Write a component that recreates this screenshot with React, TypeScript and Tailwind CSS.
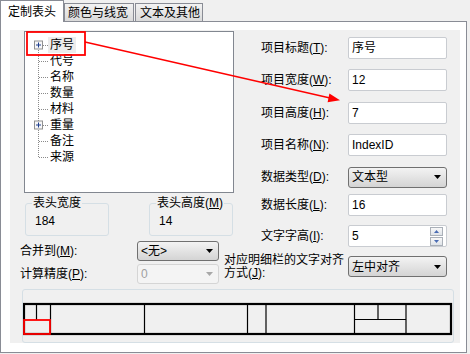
import React from 'react';

const treeItems = ['序号', '代号', '名称', '数量', '材料', '重量', '备注', '来源'];

function Key({ text, k }: { text: string; k: string }) {
  return (
    <span>
      {text}(<span className="underline underline-offset-[1px]">{k}</span>):
    </span>
  );
}

function SpinBtn({ up }: { up?: boolean }) {
  return (
    <div className="flex h-[9px] w-[13px] items-center justify-center border border-[#aab0b8] bg-linear-to-b from-[#f8f8f8] to-[#dfe3e8]">
      <svg width="5" height="3" viewBox="0 0 5 3">
        <path d={up ? 'M0 3H5L2.5 0Z' : 'M0 0H5L2.5 3Z'} fill="#4a6cb3" />
      </svg>
    </div>
  );
}

function TextBox({ value, spin }: { value: string; spin?: boolean }) {
  return (
    <div className="flex h-[22px] w-[99px] items-center rounded-[2px] border border-[#c9ccd1] bg-white pl-[3px]">
      <span className="leading-[14px]">{value}</span>
      {spin && (
        <div className="ml-auto mr-[3px] flex flex-col gap-[1px] self-start pt-[1px]">
          <SpinBtn up />
          <SpinBtn />
        </div>
      )}
    </div>
  );
}

function Combo({ value, wide, disabled }: { value: string; wide?: boolean; disabled?: boolean }) {
  const size = wide ? 'w-[99px] h-[21px]' : 'w-[82px] h-[20px]';
  const look = disabled
    ? 'border-[#d5d5d5] bg-[#f4f4f4] text-[#a0a0a0]'
    : 'border-[#707070] bg-linear-to-b from-[#f3f3f3] to-[#d4d4d4]';
  return (
    <div className={`flex items-center rounded-[3px] border pl-[3px] pr-[5px] ${size} ${look}`}>
      <span className="leading-[14px]">{value}</span>
      <svg className="ml-auto" width="7" height="4" viewBox="0 0 7 4">
        <path d="M0 0H7L3.5 4Z" fill={disabled ? '#a8a8a8' : '#000'} />
      </svg>
    </div>
  );
}

function TreeLines() {
  return (
    <svg width="14" height="128" viewBox="0 0 14 128" className="shrink-0">
      <line x1="4.5" y1="13" x2="4.5" y2="120" stroke="#8a8a8a" strokeDasharray="1 1" />
      {treeItems.map((_, i) => {
        const y = i * 16 + 8.5;
        const box = i === 0 || i === 5;
        return (
          <g key={i}>
            <line x1={box ? 9 : 5} y1={y} x2="14" y2={y} stroke="#8a8a8a" strokeDasharray="1 1" />
            {box && (
              <g>
                <rect x="0.5" y={y - 4.5} width="8" height="8" fill="#f7f7f7" stroke="#919191" />
                <line x1="2" y1={y - 0.5} x2="7" y2={y - 0.5} stroke="#1f3f8f" />
                <line x1="4.5" y1={y - 3} x2="4.5" y2={y + 2} stroke="#1f3f8f" />
              </g>
            )}
          </g>
        );
      })}
    </svg>
  );
}

function GroupBox({ title, value }: { title: React.ReactNode; value: string }) {
  return (
    <fieldset className="h-[39px] w-[84px] rounded-[3px] border border-[#d5dfe5]">
      <legend className="ml-[6px] px-[1px] leading-[12px]">{title}</legend>
      <div className="mt-[6px] pl-[9px] leading-[12px]">{value}</div>
    </fieldset>
  );
}

export default function App() {
  return (
    <div className="relative h-[354px] w-[470px] overflow-hidden bg-[#f0f0f0] font-['Liberation_Sans','Noto_Sans_CJK_SC',sans-serif] text-[12px] text-black">
      {/* tabs */}
      <div className="flex h-[21px] items-end">
        <div className="relative z-10 -mb-px flex h-[22px] w-[64px] items-center border border-b-0 border-[#898c95] bg-white pl-[7px]">
          定制表头
        </div>
        <div className="flex h-[18px] w-[70px] items-center border border-b-0 border-[#898c95] bg-linear-to-b from-[#f2f2f2] to-[#dadada] pl-[3px]">
          颜色与线宽
        </div>
        <div className="ml-[1px] flex h-[18px] w-[68px] items-center border border-b-0 border-[#898c95] bg-linear-to-b from-[#f2f2f2] to-[#dadada] pl-[4px]">
          文本及其他
        </div>
      </div>

      {/* tab page */}
      <div className="h-[332px] w-[467px] border border-[#898c95] bg-white pl-[9px] pt-[8px]">
        <div className="flex h-[313px] w-[450px] flex-col bg-[#f0f0f0]">
          <div className="flex h-[254px]">
            {/* left column */}
            <div className="flex w-[224px] shrink-0 flex-col">
              <div className="ml-[14px] mt-[1px] h-[162px] w-[210px] border border-[#828790] bg-white pl-[9px] pt-[5px]">
                <div className="flex">
                  <TreeLines />
                  <div className="flex flex-col">
                    {treeItems.map((name, i) => (
                      <div key={name} className="flex h-[16px] items-center">
                        <span className={`px-[2px] leading-[16px] ${i === 0 ? 'bg-[#ececec]' : ''}`}>{name}</span>
                      </div>
                    ))}
                  </div>
                </div>
              </div>

              <div className="mt-[4px] flex gap-[40px] pl-[15px]">
                <GroupBox title="表头宽度" value="184" />
                <GroupBox title={<span>表头高度(<span className="underline underline-offset-[1px]">M</span>)</span>} value="14" />
              </div>

              <div className="mt-[5px] flex h-[20px] items-center">
                <div className="w-[127px] pl-[10px]"><Key text="合并到" k="M" /></div>
                <Combo value="<无>" />
              </div>
              <div className="mt-[3px] flex h-[20px] items-center">
                <div className="w-[127px] pl-[10px]"><Key text="计算精度" k="P" /></div>
                <Combo value="0" disabled />
              </div>
            </div>

            {/* right column */}
            <div className="flex flex-1 flex-col">
              <div className="mt-[7px] flex h-[22px] items-center pl-[27px]">
                <div className="w-[87px]"><Key text="项目标题" k="T" /></div>
                <TextBox value="序号" />
              </div>
              <div className="mt-[10px] flex h-[22px] items-center pl-[27px]">
                <div className="w-[87px]"><Key text="项目宽度" k="W" /></div>
                <TextBox value="12" />
              </div>
              <div className="mt-[11px] flex h-[22px] items-center pl-[27px]">
                <div className="w-[87px]"><Key text="项目高度" k="H" /></div>
                <TextBox value="7" />
              </div>
              <div className="mt-[10px] flex h-[22px] items-center pl-[27px]">
                <div className="w-[87px]"><Key text="项目名称" k="N" /></div>
                <TextBox value="IndexID" />
              </div>
              <div className="mt-[11px] flex h-[20px] items-center pl-[27px]">
                <div className="w-[87px]"><Key text="数据类型" k="D" /></div>
                <Combo value="文本型" wide />
              </div>
              <div className="mt-[7px] flex h-[22px] items-center pl-[27px]">
                <div className="w-[87px]"><Key text="数据长度" k="L" /></div>
                <TextBox value="16" />
              </div>
              <div className="mt-[9px] flex h-[22px] items-center pl-[27px]">
                <div className="w-[87px]"><Key text="文字字高" k="I" /></div>
                <TextBox value="5" spin />
              </div>
              <div className="-ml-[10px] mt-[9px] flex h-[21px] items-center">
                <div className="w-[124px] leading-[13px]">
                  对应明细栏的文字对齐
                  <br />
                  <Key text="方式" k="J" />
                </div>
                <Combo value="左中对齐" wide />
              </div>
            </div>
          </div>

          {/* header preview */}
          <div className="ml-[12px] mt-[5px] h-[54px] w-[432px] rounded-[3px] border border-[#d5dfe5]">
            <svg width="430" height="52" viewBox="0 0 430 52" className="block">
              <g stroke="#000" strokeWidth="1.2" fill="none">
                <line x1="13.5" y1="14" x2="13.5" y2="30" />
                <line x1="27.5" y1="14" x2="27.5" y2="44" />
                <line x1="121.5" y1="14" x2="121.5" y2="44" />
                <line x1="224.5" y1="14" x2="224.5" y2="44" />
                <line x1="243" y1="14" x2="243" y2="44" />
                <line x1="331.5" y1="14" x2="331.5" y2="44" />
                <line x1="355" y1="14" x2="355" y2="29.5" />
                <line x1="331.5" y1="29.5" x2="383" y2="29.5" />
                <line x1="383" y1="14" x2="383" y2="44" />
              </g>
              <rect x="1" y="14" width="427" height="30" fill="none" stroke="#000" strokeWidth="2.2" />
              <rect x="1" y="30" width="26" height="14" fill="none" stroke="#ff0000" strokeWidth="1.8" />
            </svg>
          </div>
        </div>
      </div>

      {/* red annotation */}
      <svg className="pointer-events-none absolute left-0 top-0" width="470" height="354" viewBox="0 0 470 354">
        <rect x="27" y="32" width="58" height="23" fill="none" stroke="#ff0000" strokeWidth="1.8" />
        <line x1="85" y1="42" x2="330" y2="98" stroke="#ff0000" strokeWidth="1.4" />
        <path d="M340 100.3L327.6 102.2L329.4 93.4Z" fill="#ff0000" />
      </svg>
    </div>
  );
}
